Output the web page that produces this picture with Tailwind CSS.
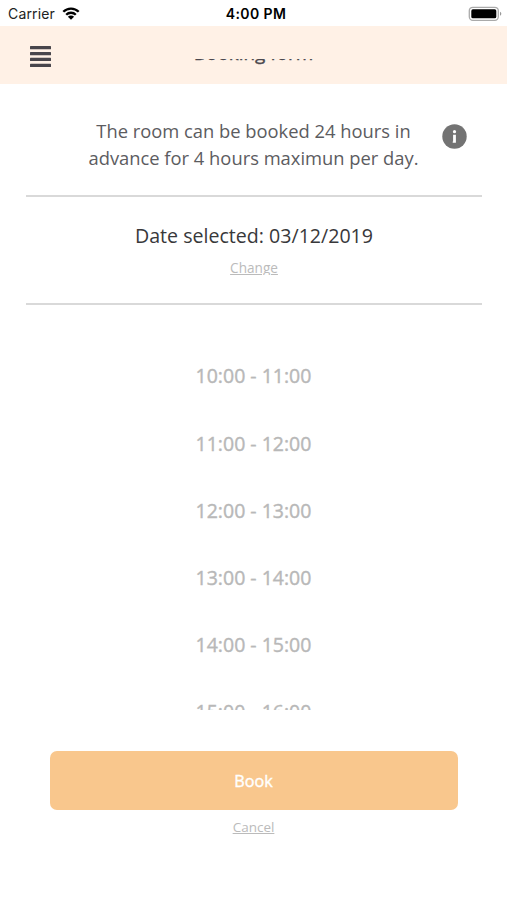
<!DOCTYPE html>
<html lang="en">
<head>
<meta charset="utf-8">
<title>Booking form</title>
<script src="https://cdn.jsdelivr.net/npm/@tailwindcss/browser@4"></script>
</head>
<body class="w-[507px] h-[900px] overflow-hidden bg-white font-['Open_Sans',sans-serif]">
<main class="flex flex-col h-[900px] whitespace-nowrap">
  <div class="h-[26px] shrink-0 grid grid-cols-3 items-center pl-2 pr-[5px] text-[14px] leading-[26px] text-[#222] font-[Inter,sans-serif]">
    <div class="flex items-center gap-[7px] pt-px">
      <span class="tracking-[0.15px]">Carrier</span>
      <svg class="-mt-px" width="18" height="13" viewBox="0 0 18 13" fill="none" stroke="#000" stroke-width="2.3"><path d="M1.3 4.8a10.8 10.8 0 0 1 15.4 0M4.2 7.8a6.7 6.7 0 0 1 9.6 0"/><path d="M9 12.7 5.9 9.7a4.4 4.4 0 0 1 6.2 0Z" fill="#000" stroke="none"/></svg>
    </div>
    <div class="text-center font-semibold text-black pl-[2px] pt-px"><span class="tracking-[0.4px]">4:00 PM</span></div>
    <div class="flex justify-end">
      <svg width="34" height="16" viewBox="0 0 34 16"><rect x="1.3" y="1.3" width="29" height="13" rx="3.5" fill="#fff" stroke="#aaa" stroke-width="1.3"/><rect x="3.3" y="3.3" width="25" height="9" rx="1.6"/><path d="M32 5.8q1.3 .5 1.3 2t-1.3 2z" fill="#999"/></svg>
    </div>
  </div>
  <header class="h-[58px] shrink-0 bg-[#fff1e6] grid grid-cols-[60px_1fr_60px] items-start">
    <svg class="mt-5 ml-[30px]" width="21" height="22" viewBox="0 0 21 22" fill="#48454b"><rect y="0" width="21" height="3.3" rx=".5"/><rect y="6" width="21" height="3.2" rx=".5"/><rect y="11.8" width="21" height="3.2" rx=".5"/><rect y="17.7" width="21" height="3.3" rx=".5"/></svg>
    <div class="mt-[33px] h-[12px] overflow-hidden flex items-end justify-center"><h1 class="text-[18.9px] leading-[26px] [-webkit-text-stroke:0.4px_#4b484e] text-[#4b484e] h-[31px]">Booking form</h1></div>
  </header>
  <section class="h-[111px] shrink-0 mx-[25px] grid grid-cols-[40px_1fr_40px] pt-[33px]">
    <p class="col-start-2 text-center text-[18.35px] leading-[27px] text-[#5c5c5f]">The room can be booked 24 hours in<br>advance for 4 hours maximun per day.</p>
    <svg class="mt-[7px]" width="25" height="25" viewBox="0 0 25 25"><circle cx="12.5" cy="12.5" r="12.2" fill="#737373"/><circle cx="12.5" cy="7.7" r="1.6" fill="#fff"/><path d="M11.1 10.7h2.8v8h-3.2v-1.1h.4z" fill="#fff"/></svg>
  </section>
  <section class="h-[110px] shrink-0 ml-[26px] mr-[25px] border-y-2 border-[#d9d9d9] text-center">
    <h2 class="mt-[25px] text-[19.6px] leading-[28px] text-[#38383a]">Date selected: 03/12/2019</h2>
    <a class="block mt-[9px] h-[16px] overflow-hidden text-[13.6px] leading-[18px] text-[#bbb] underline">Change</a>
  </section>
  <ul class="mt-[37.4px] h-[367.6px] shrink-0 overflow-hidden text-center text-[19.5px] [-webkit-text-stroke:0.4px_#b8b8b8] text-[#b8b8b8]">
    <li class="h-[67.2px] leading-[67.2px]">10:00 - 11:00</li>
    <li class="h-[67.2px] leading-[67.2px]">11:00 - 12:00</li>
    <li class="h-[67.2px] leading-[67.2px]">12:00 - 13:00</li>
    <li class="h-[67.2px] leading-[67.2px]">13:00 - 14:00</li>
    <li class="h-[67.2px] leading-[67.2px]">14:00 - 15:00</li>
    <li class="h-[67.2px] leading-[67.2px]">15:00 - 16:00</li>
  </ul>
  <footer class="mt-[41px] mx-[50px] flex flex-col items-center">
    <button class="w-[408px] h-[59px] rounded-[7px] bg-[#f9c78d] text-white text-[16.2px] [-webkit-text-stroke:0.4px_#fff] pt-px">Book</button>
    <a class="mt-[8px] text-[13.5px] leading-[18px] text-[#bbb] underline">Cancel</a>
  </footer>
</main>
</body>
</html>
